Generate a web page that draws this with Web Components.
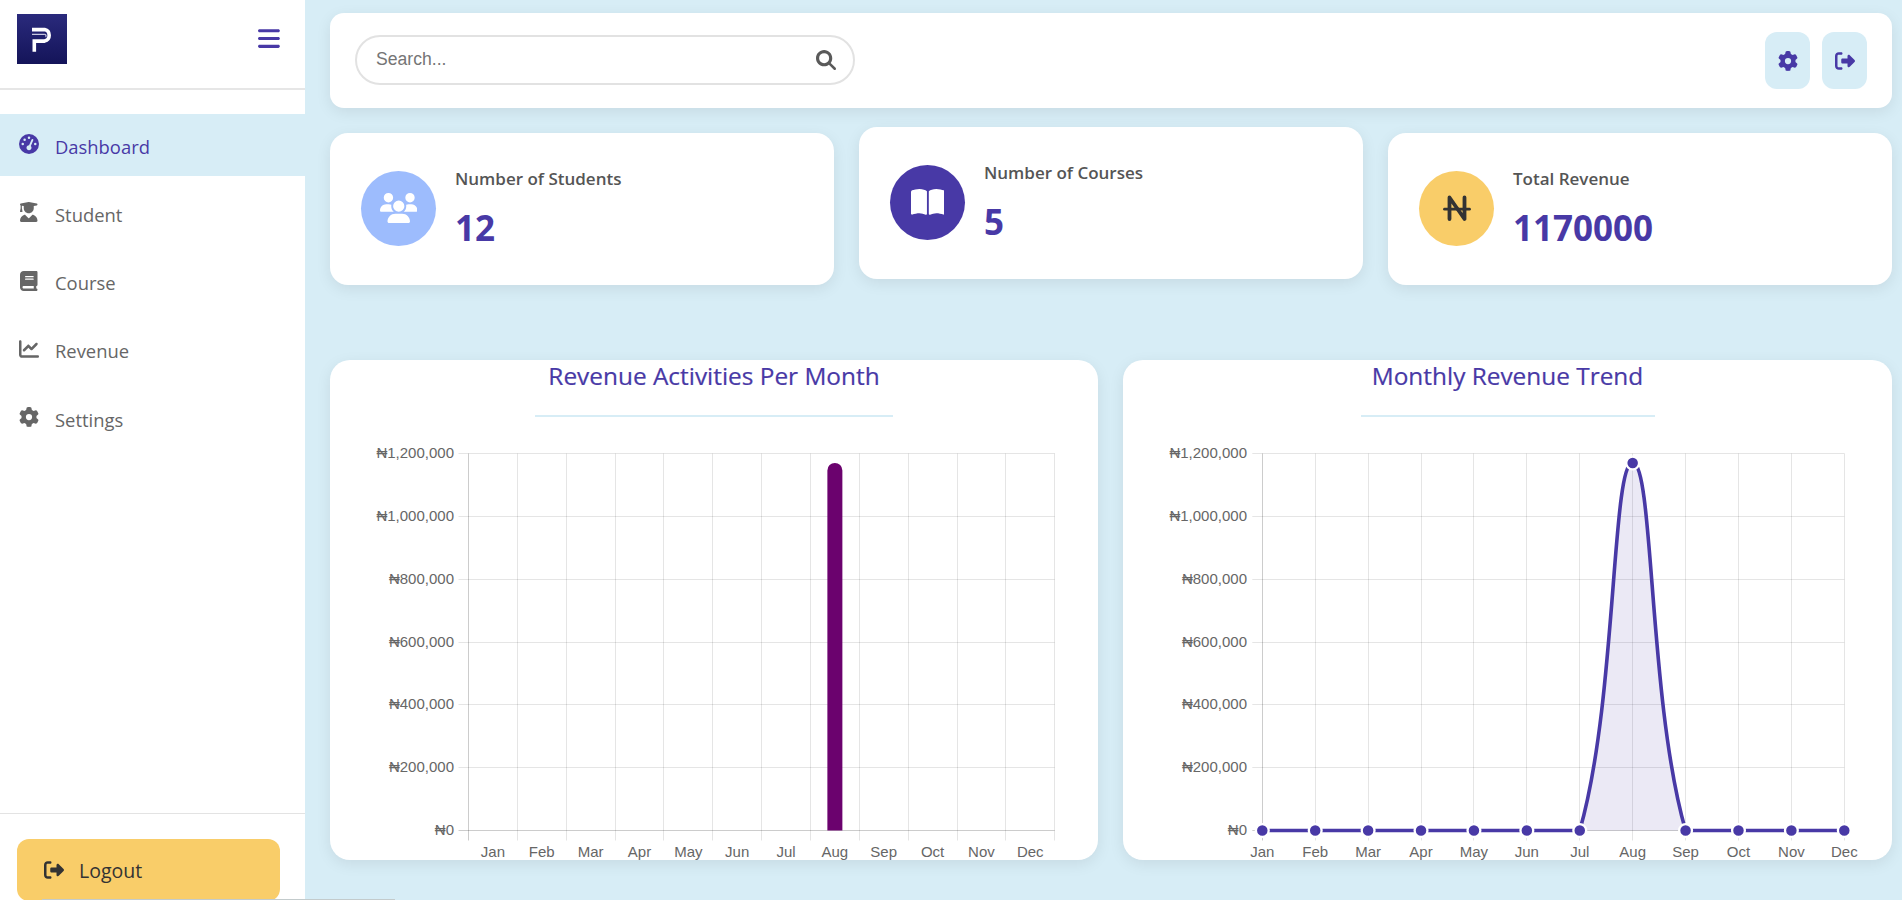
<!DOCTYPE html>
<html lang="en">
<head>
<meta charset="utf-8">
<title>Dashboard</title>
<style>
  html, body { margin: 0; height: 900px; overflow: hidden; background: #d7edf6; }
  body { font-family: "Open Sans", "Noto Sans", sans-serif; }
</style>
</head>
<body>
<app-shell>
  <side-nav slot="nav">
    <nav-item icon="gauge" active>Dashboard</nav-item>
    <nav-item icon="graduate">Student</nav-item>
    <nav-item icon="book">Course</nav-item>
    <nav-item icon="chart">Revenue</nav-item>
    <nav-item icon="gear">Settings</nav-item>
  </side-nav>
  <top-bar></top-bar>
  <stat-row>
    <stat-card icon="users" tone="#9dbcfd" ink="#fff" label="Number of Students" value="12"></stat-card>
    <stat-card icon="open" tone="#4839a6" ink="#fff" label="Number of Courses" value="5" raised></stat-card>
    <stat-card icon="naira" tone="#f9cd69" ink="#333" label="Total Revenue" value="1170000"></stat-card>
  </stat-row>
  <chart-row>
    <chart-card heading="Revenue Activities Per Month" rule="358" kind="bar" left="138.5" right="724.7"></chart-card>
    <chart-card heading="Monthly Revenue Trend" rule="294" kind="line" left="139.3" right="721.3"></chart-card>
  </chart-row>
</app-shell>

<script>
(function () {
  // 图标路径（Font Awesome 6 solid），name -> [viewBox 宽, path]
  var ICONS = {
    bars: [448, 'M0 96C0 78.3 14.3 64 32 64H416c17.7 0 32 14.3 32 32s-14.3 32-32 32H32C14.3 128 0 113.7 0 96zM0 256c0-17.7 14.3-32 32-32H416c17.7 0 32 14.3 32 32s-14.3 32-32 32H32c-17.7 0-32-14.3-32-32zM448 416c0 17.7-14.3 32-32 32H32c-17.7 0-32-14.3-32-32s14.3-32 32-32H416c17.7 0 32 14.3 32 32z'],
    gauge: [512, 'M0 256a256 256 0 1 1 512 0A256 256 0 1 1 0 256zM288 96a32 32 0 1 0 -64 0 32 32 0 1 0 64 0zM256 416c35.3 0 64-28.7 64-64c0-17.4-6.9-33.1-18.1-44.6L366 161.7c5.3-12.1-.2-26.3-12.3-31.6s-26.3 .2-31.6 12.3L257.9 288c-.6 0-1.3 0-1.9 0c-35.3 0-64 28.7-64 64s28.7 64 64 64zM176 144a32 32 0 1 0 -64 0 32 32 0 1 0 64 0zM96 288a32 32 0 1 0 0-64 32 32 0 1 0 0 64zm352-32a32 32 0 1 0 -64 0 32 32 0 1 0 64 0z'],
    graduate: [448, 'M219.3 .5c3.1-.6 6.3-.6 9.4 0l200 40C439.9 42.7 448 52.6 448 64s-8.1 21.3-19.3 23.5L352 102.9V160c0 70.7-57.3 128-128 128s-128-57.3-128-128V102.9L48 93.3v65.1l15.7 78.4c.9 4.7-.3 9.6-3.3 13.3s-7.6 5.9-12.4 5.9H16c-4.8 0-9.3-2.1-12.4-5.9s-4.3-8.6-3.3-13.3L16 158.4V86.6C6.5 83.3 0 74.3 0 64C0 52.6 8.1 42.7 19.3 40.5l200-40zM111.9 327.7c10.5-3.4 21.8 .4 29.4 8.5l71 75.5c6.3 6.7 17 6.7 23.3 0l71-75.5c7.6-8.1 18.9-11.9 29.4-8.5C401 348.6 448 409.4 448 481.3c0 17-13.8 30.7-30.7 30.7H30.7C13.8 512 0 498.2 0 481.3c0-71.9 47-132.7 111.9-153.6z'],
    book: [448, 'M96 0C43 0 0 43 0 96V416c0 53 43 96 96 96H384h32c17.7 0 32-14.3 32-32s-14.3-32-32-32V384c17.7 0 32-14.3 32-32V32c0-17.7-14.3-32-32-32H384 96zm0 384H352v64H96c-17.7 0-32-14.3-32-32s14.3-32 32-32zm32-240c0-8.8 7.2-16 16-16H336c8.8 0 16 7.2 16 16s-7.2 16-16 16H144c-8.8 0-16-7.2-16-16zm16 48H336c8.8 0 16 7.2 16 16s-7.2 16-16 16H144c-8.8 0-16-7.2-16-16s7.2-16 16-16z'],
    chart: [512, 'M64 64c0-17.7-14.3-32-32-32S0 46.3 0 64V400c0 44.2 35.8 80 80 80H480c17.7 0 32-14.3 32-32s-14.3-32-32-32H80c-8.8 0-16-7.2-16-16V64zm406.6 86.6c12.5-12.5 12.5-32.8 0-45.3s-32.8-12.5-45.3 0L320 210.7l-57.4-57.4c-12.5-12.5-32.8-12.5-45.3 0l-112 112c-12.5 12.5-12.5 32.8 0 45.3s32.8 12.5 45.3 0L240 221.3l57.4 57.4c12.5 12.5 32.8 12.5 45.3 0l128-128z'],
    gear: [512, 'M495.9 166.6c3.2 8.7 .5 18.4-6.4 24.6l-43.3 39.4c1.1 8.3 1.7 16.8 1.7 25.4s-.6 17.1-1.7 25.4l43.3 39.4c6.9 6.2 9.6 15.9 6.4 24.6c-4.4 11.9-9.7 23.3-15.8 34.3l-4.7 8.1c-6.6 11-14 21.4-22.1 31.2c-5.9 7.2-15.7 9.6-24.5 6.8l-55.7-17.7c-13.4 10.3-28.2 18.9-44 25.4l-12.5 57.1c-2 9.1-9 16.3-18.2 17.8c-13.8 2.3-28 3.5-42.5 3.5s-28.7-1.2-42.5-3.5c-9.2-1.5-16.2-8.7-18.2-17.8l-12.5-57.1c-15.8-6.5-30.6-15.1-44-25.4L83.1 425.9c-8.8 2.8-18.6 .3-24.5-6.8c-8.1-9.8-15.5-20.2-22.1-31.2l-4.7-8.1c-6.1-11-11.4-22.4-15.8-34.3c-3.2-8.7-.5-18.4 6.4-24.6l43.3-39.4C64.6 273.1 64 264.6 64 256s.6-17.1 1.7-25.4L22.4 191.2c-6.9-6.2-9.6-15.9-6.4-24.6c4.4-11.9 9.7-23.3 15.8-34.3l4.7-8.1c6.6-11 14-21.4 22.1-31.2c5.9-7.2 15.7-9.6 24.5-6.8l55.7 17.7c13.4-10.3 28.2-18.9 44-25.4l12.5-57.1c2-9.1 9-16.3 18.2-17.8C227.3 1.2 241.5 0 256 0s28.7 1.2 42.5 3.5c9.2 1.5 16.2 8.7 18.2 17.8l12.5 57.1c15.8 6.5 30.6 15.1 44 25.4l55.7-17.7c8.8-2.8 18.6-.3 24.5 6.8c8.1 9.8 15.5 20.2 22.1 31.2l4.7 8.1c6.1 11 11.4 22.4 15.8 34.3zM256 336a80 80 0 1 0 0-160 80 80 0 1 0 0 160z'],
    search: [512, 'M416 208c0 45.9-14.9 88.3-40 122.7L502.6 457.4c12.5 12.5 12.5 32.8 0 45.3s-32.8 12.5-45.3 0L330.7 376c-34.4 25.2-76.8 40-122.7 40C93.1 416 0 322.9 0 208S93.1 0 208 0S416 93.1 416 208zM208 336a128 128 0 1 0 0-256 128 128 0 1 0 0 256z'],
    exit: [512, 'M377.9 105.9L500.7 228.7c7.2 7.2 11.3 17.1 11.3 27.3s-4.1 20.1-11.3 27.3L377.9 406.1c-6.4 6.4-15 9.9-24 9.9c-18.7 0-33.9-15.2-33.9-33.9l0-62.1-128 0c-17.7 0-32-14.3-32-32l0-64c0-17.7 14.3-32 32-32l128 0 0-62.1c0-18.7 15.2-33.9 33.9-33.9c9 0 17.6 3.6 24 9.9zM160 96L96 96c-17.7 0-32 14.3-32 32l0 256c0 17.7 14.3 32 32 32l64 0c17.7 0 32 14.3 32 32s-14.3 32-32 32l-64 0c-53 0-96-43-96-96L0 128C0 75 43 32 96 32l64 0c17.7 0 32 14.3 32 32s-14.3 32-32 32z'],
    users: [640, 'M144 0a80 80 0 1 1 0 160A80 80 0 1 1 144 0zM512 0a80 80 0 1 1 0 160A80 80 0 1 1 512 0zM0 298.7C0 239.8 47.8 192 106.7 192h42.7c15.9 0 31 3.5 44.6 9.7c-1.3 7.2-1.9 14.7-1.9 22.3c0 38.2 16.8 72.5 43.3 96c-.2 0-.4 0-.7 0H21.3C9.6 320 0 310.4 0 298.7zM405.3 320c-.2 0-.4 0-.7 0c26.6-23.5 43.3-57.8 43.3-96c0-7.6-.7-15-1.9-22.3c13.6-6.3 28.7-9.7 44.6-9.7h42.7C592.2 192 640 239.8 640 298.7c0 11.8-9.6 21.3-21.3 21.3H405.3zM224 224a96 96 0 1 1 192 0 96 96 0 1 1 -192 0zM128 485.3C128 411.7 187.7 352 261.3 352H378.7C452.3 352 512 411.7 512 485.3c0 14.7-11.9 26.7-26.7 26.7H154.7c-14.7 0-26.7-11.9-26.7-26.7z'],
    open: [576, 'M249.6 471.5c10.8 3.8 22.4-4.1 22.4-15.5V78.6c0-4.2-1.6-8.4-5-11C247.4 52 202.4 32 144 32C93.5 32 46.3 45.3 18.1 56.1C6.8 60.5 0 71.7 0 83.8V454.1c0 11.9 12.8 20.2 24.1 16.5C55.6 460.1 105.5 448 144 448c33.9 0 79 14 105.6 23.5zm76.8 0C353 462 398.1 448 432 448c38.5 0 88.4 12.1 119.9 22.6c11.3 3.8 24.1-4.6 24.1-16.5V83.8c0-12.1-6.8-23.3-18.1-27.6C529.7 45.3 482.5 32 432 32c-58.4 0-103.4 20-123 35.6c-3.3 2.6-5 6.8-5 11V456c0 11.4 11.7 19.3 22.4 15.5z']
  };

  function iconSvg(name, h) {
    var ic = ICONS[name];
    var w = h * ic[0] / 512;
    return '<svg width="' + w + '" height="' + h + '" viewBox="0 0 ' + ic[0] + ' 512" fill="currentColor" style="display:block"><path d="' + ic[1] + '"/></svg>';
  }

  function nairaSvg() {
    return '<svg width="28" height="28" viewBox="0 0 28 28" fill="none" stroke="currentColor" stroke-width="3.8" stroke-linecap="round" stroke-linejoin="round" style="display:block">' +
      '<path d="M6.5 25V3.5L21.5 25V3.5"/><path d="M1.5 15.2H26.5" stroke-width="2.8"/></svg>';
  }

  function define(tag, html, extra) {
    var tpl = document.createElement('template');
    tpl.innerHTML = html;
    customElements.define(tag, class extends HTMLElement {
      constructor() {
        super();
        this.attachShadow({ mode: 'open' }).appendChild(tpl.content.cloneNode(true));
      }
      connectedCallback() {
        if (extra) extra.call(this, this.shadowRoot);
      }
    });
  }

  define('app-shell', [
    '<style>',
    ':host{display:grid;grid-template-columns:305px 1fr;height:900px;overflow:hidden;position:relative;}',
    'main{padding:13px 10px 0 25px;min-width:0;}',
    '.edge{position:absolute;left:42px;bottom:0;width:353px;height:1px;background:#c3cbcc;}',
    '</style>',
    '<slot name="nav"></slot><main><slot></slot></main><div class="edge"></div>'
  ].join(''));

  define('side-nav', [
    '<style>',
    ':host{display:flex;flex-direction:column;height:900px;background:#fff;overflow:hidden;}',
    'header{height:77px;flex:none;display:flex;align-items:center;justify-content:space-between;padding:0 25px 11px 17px;border-bottom:2px solid #e6e6e6;box-sizing:content-box;}',
    '.logo{display:block;width:50px;height:50px;}',
    '.burger{color:#4839a6;}',
    '.menu{padding-top:24px;display:flex;flex-direction:column;gap:6.25px;}',
    'footer{margin-top:auto;flex:none;border-top:1px solid #e3e3e3;padding:25px 25px 0 17px;height:61px;}',
    '.logout{height:62px;border-radius:12px;background:#f9cd69;color:#333;display:flex;align-items:center;gap:15px;padding:0 0 0 27px;font:400 19.5px "Open Sans","Noto Sans",sans-serif;}',
    '</style>',
    '<header>',
    '<svg class="logo" viewBox="0 0 50 50"><defs><linearGradient id="lg" x1="0" y1="0" x2="0" y2="1"><stop offset="0" stop-color="#2a2a7c"/><stop offset="1" stop-color="#141459"/></linearGradient></defs>',
    '<rect width="50" height="50" fill="url(#lg)"/>',
    '<path d="M15 15.6H27.6A5.9 5.9 0 0 1 27.6 27.1H17.3V37.8" fill="none" stroke="#fff" stroke-width="3.6"/>',
    '<path d="M15 20.3H27.2A1.6 1.6 0 0 1 28.6 23" fill="none" stroke="#c9c9e0" stroke-width="1.2"/></svg>',
    '<span class="burger" id="b"></span>',
    '</header>',
    '<div class="menu"><slot></slot></div>',
    '<footer><div class="logout"><span id="o"></span><span>Logout</span></div></footer>'
  ].join(''), function (root) {
    root.getElementById('b').innerHTML = iconSvg('bars', 25);
    root.getElementById('o').innerHTML = iconSvg('exit', 20);
  });

  define('nav-item', [
    '<style>',
    ':host{display:flex;align-items:center;height:62px;box-sizing:border-box;padding-top:2px;color:#666;font-size:18.4px;}',
    ':host([active]){background:#d7edf6;color:#4839a6;}',
    '.ic{width:20px;margin-left:19px;margin-right:16px;display:flex;justify-content:center;position:relative;top:-2px;}',
    '</style>',
    '<span class="ic" id="i"></span><slot></slot>'
  ].join(''), function (root) {
    root.getElementById('i').innerHTML = iconSvg(this.getAttribute('icon'), 20);
  });

  define('top-bar', [
    '<style>',
    ':host{display:flex;align-items:center;justify-content:space-between;height:95px;padding:0 25px;background:#fff;border-radius:14px;box-shadow:0 4px 15px rgba(0,0,0,.08);}',
    '.search{display:flex;align-items:center;width:500px;height:50px;box-sizing:border-box;margin-top:-2px;border:2px solid #e2e2e2;border-radius:25px;padding:0 17px 0 19px;color:#5a5a5a;}',
    'input{flex:1;border:0;outline:0;min-width:0;padding:0;background:none;font:17.6px "Liberation Sans",Arial,sans-serif;color:#333;}',
    'input::placeholder{color:#757575;opacity:1;}',
    '.btns{display:flex;gap:12px;}',
    '.btn{width:45px;height:57px;border-radius:12px;background:#d7edf6;color:#4839a6;display:flex;align-items:center;justify-content:center;}',
    '</style>',
    '<div class="search"><input type="text" placeholder="Search..."><span id="s"></span></div>',
    '<div class="btns"><div class="btn" id="g"></div><div class="btn" id="x"></div></div>'
  ].join(''), function (root) {
    root.getElementById('s').innerHTML = iconSvg('search', 20);
    root.getElementById('g').innerHTML = iconSvg('gear', 20);
    root.getElementById('x').innerHTML = iconSvg('exit', 20);
  });

  define('stat-row', '<style>:host{display:grid;grid-template-columns:repeat(3,1fr);gap:25px;margin-top:25px;}</style><slot></slot>');

  define('stat-card', [
    '<style>',
    ':host{display:flex;align-items:center;gap:19px;height:152px;box-sizing:border-box;padding:0 0 1.5px 31px;background:#fff;border-radius:18px;box-shadow:0 4px 15px rgba(0,0,0,.08);}',
    ':host([raised]){transform:translateY(-6px);}',
    '.dot{width:75px;height:75px;border-radius:50%;display:flex;align-items:center;justify-content:center;flex:none;}',
    '.label{font-size:17px;line-height:24px;font-weight:600;color:#555;}',
    '.value{font-size:35px;line-height:44px;font-weight:700;color:#4839a6;margin-top:15px;}',
    '</style>',
    '<div class="dot" id="d"></div><div><div class="label" id="l"></div><div class="value" id="v"></div></div>'
  ].join(''), function (root) {
    var d = root.getElementById('d');
    var name = this.getAttribute('icon');
    d.style.background = this.getAttribute('tone');
    d.style.color = this.getAttribute('ink');
    if (name === 'naira') d.innerHTML = nairaSvg();
    else d.innerHTML = iconSvg(name, 30);
    root.getElementById('l').textContent = this.getAttribute('label');
    root.getElementById('v').textContent = this.getAttribute('value');
  });

  define('chart-row', '<style>:host{display:grid;grid-template-columns:768px 769px;gap:25px;margin-top:75px;}</style><slot></slot>');

  var MONTHS = ['Jan', 'Feb', 'Mar', 'Apr', 'May', 'Jun', 'Jul', 'Aug', 'Sep', 'Oct', 'Nov', 'Dec'];
  var Y_LABELS = ['₦1,200,000', '₦1,000,000', '₦800,000', '₦600,000', '₦400,000', '₦200,000', '₦0'];
  var VALUES = [0, 0, 0, 0, 0, 0, 0, 1170000, 0, 0, 0, 0];
  var PLOT_TOP = 36.5, PLOT_BOTTOM = 413.5;
  var GRID = 'rgba(0,0,0,.1)', AXIS = 'rgba(0,0,0,.2)', INK = '#4839a6';

  function crisp(v) { return Math.round(v - 0.5) + 0.5; }
  function yOf(v) { return PLOT_BOTTOM - (v / 1200000) * (PLOT_BOTTOM - PLOT_TOP); }

  // 坐标轴和网格，柱状图的月份在区间中间，折线图在刻度上
  function gridSvg(left, right, isBar) {
    var out = '';
    for (var i = 0; i < 7; i++) {
      var y = crisp(PLOT_TOP + i * (PLOT_BOTTOM - PLOT_TOP) / 6);
      out += '<line x1="' + (left - 10) + '" x2="' + right + '" y1="' + y + '" y2="' + y + '" stroke="' + (i === 6 ? AXIS : GRID) + '"/>';
      out += '<text x="124" y="' + (y + 4) + '" text-anchor="end">' + Y_LABELS[i] + '</text>';
    }
    var n = isBar ? 12 : 11;
    var step = (right - left) / n;
    for (var k = 0; k <= n; k++) {
      var x = crisp(left + k * step);
      out += '<line x1="' + x + '" x2="' + x + '" y1="' + PLOT_TOP + '" y2="' + (PLOT_BOTTOM + 10) + '" stroke="' + (k === 0 ? AXIS : GRID) + '"/>';
    }
    for (var m = 0; m < 12; m++) {
      var cx = left + (isBar ? m + 0.5 : m) * step;
      out += '<text x="' + cx + '" y="440" text-anchor="middle">' + MONTHS[m] + '</text>';
    }
    return out;
  }

  function barSvg(left, right) {
    var step = (right - left) / 12;
    var cx = left + 7.5 * step, top = yOf(1170000);
    return '<path d="M' + (cx - 7.5) + ' ' + PLOT_BOTTOM + 'V' + (top + 7.5) + 'a7.5 7.5 0 0 1 15 0V' + PLOT_BOTTOM + 'z" fill="#6b026e"/>';
  }

  // 控制点按 chart.js 的 tension 0.4 算，并限制在绘图区内
  function linePath(pts) {
    var d = 'M' + pts[0].x + ' ' + pts[0].y;
    var t = 0.4;
    function cps(i) {
      var c = pts[i], p = pts[i - 1] || c, n = pts[i + 1] || c;
      var d01 = Math.hypot(c.x - p.x, c.y - p.y), d12 = Math.hypot(n.x - c.x, n.y - c.y);
      var sum = d01 + d12 || 1;
      var fa = t * d01 / sum, fb = t * d12 / sum;
      return {
        px: c.x - fa * (n.x - p.x), py: Math.min(PLOT_BOTTOM, c.y - fa * (n.y - p.y)),
        nx: c.x + fb * (n.x - p.x), ny: Math.min(PLOT_BOTTOM, c.y + fb * (n.y - p.y))
      };
    }
    for (var i = 1; i < pts.length; i++) {
      var a = cps(i - 1), b = cps(i);
      d += 'C' + a.nx + ' ' + a.ny + ' ' + b.px + ' ' + b.py + ' ' + pts[i].x + ' ' + pts[i].y;
    }
    return d;
  }

  function lineSvg(left, right) {
    var step = (right - left) / 11;
    var pts = VALUES.map(function (v, i) { return { x: left + i * step, y: yOf(v) }; });
    var d = linePath(pts);
    var out = '<path d="' + d + 'V' + PLOT_BOTTOM + 'H' + left + 'z" fill="rgba(72,57,166,.11)"/>';
    out += '<path d="' + d + '" fill="none" stroke="' + INK + '" stroke-width="3.6"/>';
    pts.forEach(function (p) {
      out += '<circle cx="' + p.x + '" cy="' + p.y + '" r="6.4" fill="' + INK + '" stroke="#fff" stroke-width="2.3"/>';
    });
    return out;
  }

  define('chart-card', [
    '<style>',
    ':host{display:block;height:500px;background:#fff;border-radius:20px;box-shadow:0 4px 15px rgba(0,0,0,.08);}',
    '.clip{height:500px;border-radius:20px;overflow:hidden;display:flex;flex-direction:column;align-items:center;}',
    'h2{margin:0;height:55px;padding-top:1px;box-sizing:border-box;font-size:24.4px;line-height:30px;font-weight:400;color:#4839a6;-webkit-text-stroke:.2px #4839a6;}',
    '.rule{height:2px;background:#d7edf6;flex:none;}',
    'svg{display:block;flex:none;width:100%;height:443px;font:15px "Liberation Sans",Arial,sans-serif;fill:#666;}',
    '</style>',
    '<div class="clip"><h2 id="h"></h2><div class="rule" id="r"></div><svg id="c"></svg></div>'
  ].join(''), function (root) {
    var left = parseFloat(this.getAttribute('left'));
    var right = parseFloat(this.getAttribute('right'));
    var isBar = this.getAttribute('kind') === 'bar';
    root.getElementById('h').textContent = this.getAttribute('heading');
    root.getElementById('r').style.width = this.getAttribute('rule') + 'px';
    root.getElementById('c').innerHTML = gridSvg(left, right, isBar) + (isBar ? barSvg(left, right) : lineSvg(left, right));
  });
})();
</script>
</body>
</html>
